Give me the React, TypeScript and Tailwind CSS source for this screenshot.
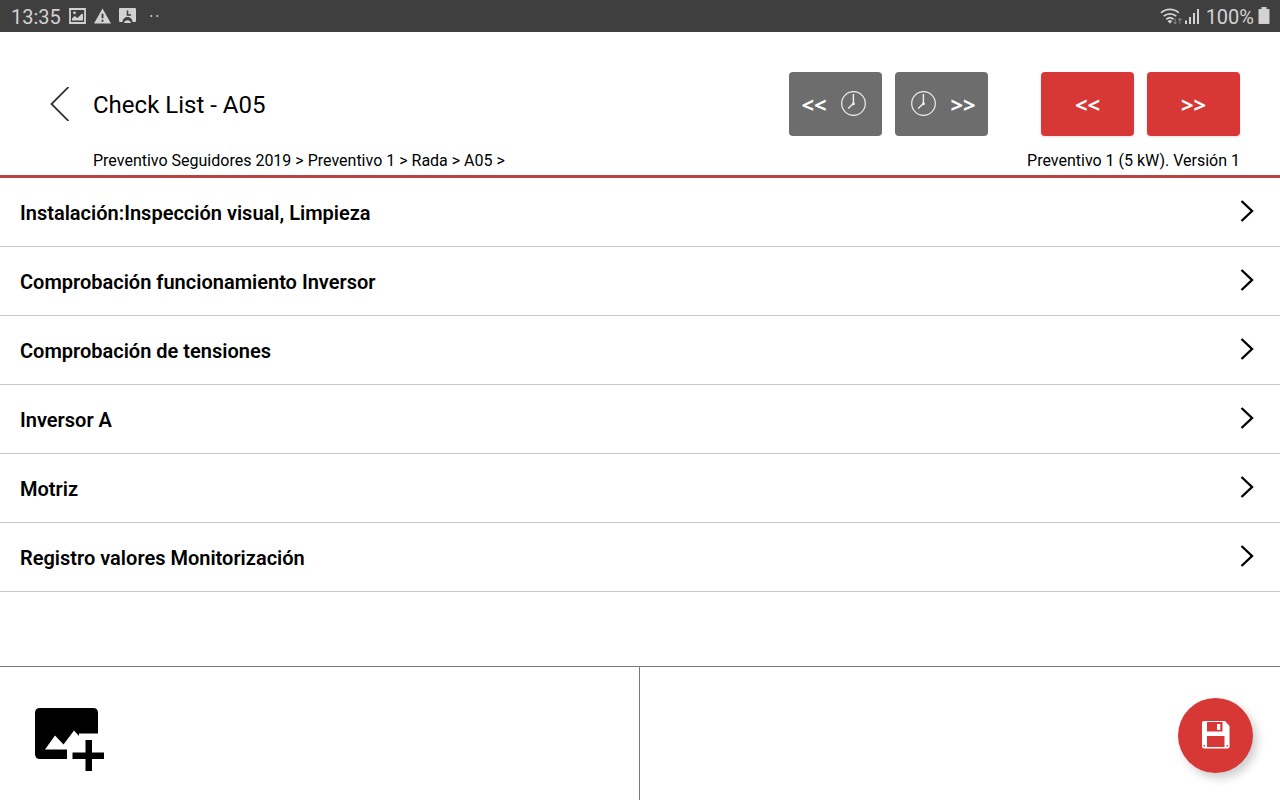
import type { ReactNode } from "react";

const SECTIONS = [
  "Instalación:Inspección visual, Limpieza",
  "Comprobación funcionamiento Inversor",
  "Comprobación de tensiones",
  "Inversor A",
  "Motriz",
  "Registro valores Monitorización",
];

function StatusBar() {
  return (
    <div className="flex h-8 items-center justify-between bg-[#3f3f3f] pr-2.5 pl-[11px] text-xl text-[#d2d2d2]">
      <div className="flex items-center">
        <span className="pt-0.5">13:35</span>
        <svg className="ml-2" width="17" height="16" viewBox="0 0 17 16" fill="none">
          <path d="M1 1h15v14H1z" stroke="currentColor" strokeWidth="1.8" />
          <path d="M3 12.5V10.5l2.5-2.5 3 2L13 5.5l1 1v6z" fill="currentColor" />
          <circle cx="5.5" cy="4.8" r="1.4" fill="currentColor" />
        </svg>
        <svg className="ml-2" width="17" height="16" viewBox="0 0 18 16">
          <path
            fillRule="evenodd"
            d="M9 0l9 16H0zM8 5.5v5h2v-5zM8 12v2h2v-2z"
            fill="currentColor"
          />
        </svg>
        <svg className="ml-2" width="17" height="16" viewBox="0 0 17 16" fill="none">
          <path
            d="M1 0h15a1 1 0 0 1 1 1v12a1 1 0 0 1-1 1h-2.500a5 5 0 0 0-10 0H1a1 1 0 0 1-1-1V1a1 1 0 0 1 1-1z"
            fill="currentColor"
          />
          <path d="M8.500 2.500V7H12" stroke="#3f3f3f" strokeWidth="1.600" />
          <path d="M5 15a3.600 3.600 0 0 1 7 0z" fill="currentColor" />
        </svg>
        <svg className="ml-3.5" width="9" height="4" viewBox="0 0 9 4" fill="currentColor">
          <circle cx="1.300" cy="2" r="1" />
          <circle cx="7.300" cy="2" r="1" />
        </svg>
      </div>
      <div className="flex items-center">
        <svg width="23" height="19" viewBox="0 0 22 18" fill="none" stroke="currentColor">
          <path d="M1 5.500a12.500 12.500 0 0 1 17 0M3.500 8.700a9 9 0 0 1 12 0M6 11.700a5.400 5.400 0 0 1 7 0" strokeWidth="1.700" />
          <path d="M7.300 13.300a3.500 3.500 0 0 1 4.400 0L9.500 16z" fill="currentColor" stroke="none" />
          <path d="M14.500 11v5M13 14.500l1.500 1.500 1.500-1.500M19 16v-5M17.500 12.500L19 11l1.500 1.500" stroke="#858585" />
        </svg>
        <svg className="ml-0.5" width="15" height="16" viewBox="0 0 15 16" fill="currentColor">
          <path d="M0 12.500h2V16H0zM4 9h2v7H4zM8 5h2v11H8zM12 1h2v15h-2z" />
        </svg>
        <span className="ml-1.5 pt-0.5">100%</span>
        <svg className="mb-0.5 ml-1" width="12" height="17" viewBox="0 0 11 17" fill="currentColor">
          <path d="M3 0h5v2h2.200q.8 0 .8.800V16q0 1-.8 1H.8Q0 17 0 16V2.800Q0 2 .8 2H3z" />
        </svg>
      </div>
    </div>
  );
}

function ClockIcon() {
  return (
    <svg width="25" height="25" viewBox="0 0 25 25" fill="none" stroke="#f0f0f0" className="mb-0.5">
      <circle cx="12.500" cy="12.500" r="11.800" strokeWidth="1.200" />
      <path d="M12.400 3v9.500L7.200 17.500" strokeWidth="1.400" />
      <circle cx="12.400" cy="12.800" r="1.500" fill="#f0f0f0" stroke="none" />
    </svg>
  );
}

function NavButton({ label, className, children }: { label: string; className: string; children: ReactNode }) {
  return (
    <button
      type="button"
      aria-label={label}
      className={`flex h-16 w-[93px] items-center justify-center gap-3.5 rounded-sm font-['Open_Sans',sans-serif] text-[22px] font-bold text-white ${className}`}
    >
      {children}
    </button>
  );
}

function Header() {
  return (
    <header className="border-b-[3px] border-[#b94444] pt-10 pr-10 pl-[50px]">
      <div className="flex h-16 items-center justify-between">
        <div className="flex items-center gap-6">
          <button type="button" aria-label="Volver">
            <svg width="19" height="34" viewBox="0 0 19 34" fill="none" stroke="#333" strokeWidth="1.800">
              <path d="M18.500 0L1.500 17l17 17" />
            </svg>
          </button>
          <h1 className="pt-0.5 text-2xl">Check List - A05</h1>
        </div>
        <div className="flex gap-[53px]">
          <div className="flex gap-[13px]">
            <NavButton label="Anterior pendiente" className="bg-[#6d6d6d] pr-1">
              <span>&lt;&lt;</span>
              <ClockIcon />
            </NavButton>
            <NavButton label="Siguiente pendiente" className="bg-[#6d6d6d] pl-1">
              <ClockIcon />
              <span>&gt;&gt;</span>
            </NavButton>
          </div>
          <div className="flex gap-[13px]">
            <NavButton label="Anterior" className="bg-[#d73836] shadow-sm">
              &lt;&lt;
            </NavButton>
            <NavButton label="Siguiente" className="bg-[#d73836] shadow-sm">
              &gt;&gt;
            </NavButton>
          </div>
        </div>
      </div>
      <div className="flex justify-between pt-[13px] pb-0.5 pl-[43px] text-base">
        <p>Preventivo Seguidores 2019 &gt; Preventivo 1 &gt; Rada &gt; A05 &gt;</p>
        <p>Preventivo 1 (5 kW). Versión 1</p>
      </div>
    </header>
  );
}

function AddImageIcon() {
  return (
    <svg width="69" height="63" viewBox="0 0 69 63">
      <path
        d="M5 0h53q5 0 5 5v20.500H44V28l-5-5.500-10.500 14-8.500-9L10 41.500h22V51H5q-5 0-5-5V5q0-5 5-5z"
        fill="#000"
      />
      <path d="M50.500 32H57v12.500h12V51H57v12h-6.500V51h-13v-6.500h13z" fill="#000" />
    </svg>
  );
}

function SaveIcon() {
  return (
    <svg width="28" height="28" viewBox="0 0 28 28" fill="#d73836" className="mb-0.5">
      <path d="M2 0h21l4.500 5v20.500q0 2-2 2H2q-2 0-2-2V2q0-2 2-2z" fill="#fff" />
      <path d="M5 1h15.500v9.500H5zM5 15h17.500v11H5zM1.500 24H3v1.500H1.500zM24.500 24H26v1.500h-1.500z" />
      <path d="M15 3h3.300v6H15z" fill="#fff" />
    </svg>
  );
}

export default function App() {
  return (
    <div className="flex min-h-screen flex-col bg-white font-[Roboto,sans-serif] text-black">
      <StatusBar />
      <Header />
      <main className="flex-1">
        <ul>
          {SECTIONS.map((title) => (
            <li key={title} className="border-b border-[#c8c8c8]">
              <button
                type="button"
                className="flex h-[68px] w-full items-center justify-between pr-[26px] pb-0.5 pl-5 text-left"
              >
                <span className="pt-1 text-xl font-semibold">{title}</span>
                <svg width="14" height="22" viewBox="0 0 14 22" fill="none" stroke="#000" strokeWidth="2.400">
                  <path d="M1.500 1L12 11 1.500 21" />
                </svg>
              </button>
            </li>
          ))}
        </ul>
      </main>
      <footer className="flex h-[134px] border-t border-[#7a7a7a]">
        <div className="flex w-1/2 items-center border-r border-[#7a7a7a] pt-3 pl-[35px]">
          <button type="button" aria-label="Añadir imagen">
            <AddImageIcon />
          </button>
        </div>
        <div className="flex w-1/2 items-center justify-end pt-1 pr-[27px]">
          <button
            type="button"
            aria-label="Guardar"
            className="flex size-[75px] items-center justify-center rounded-full bg-[#d73836] shadow-[4px_5px_10px_rgba(0,0,0,0.2)]"
          >
            <SaveIcon />
          </button>
        </div>
      </footer>
    </div>
  );
}
